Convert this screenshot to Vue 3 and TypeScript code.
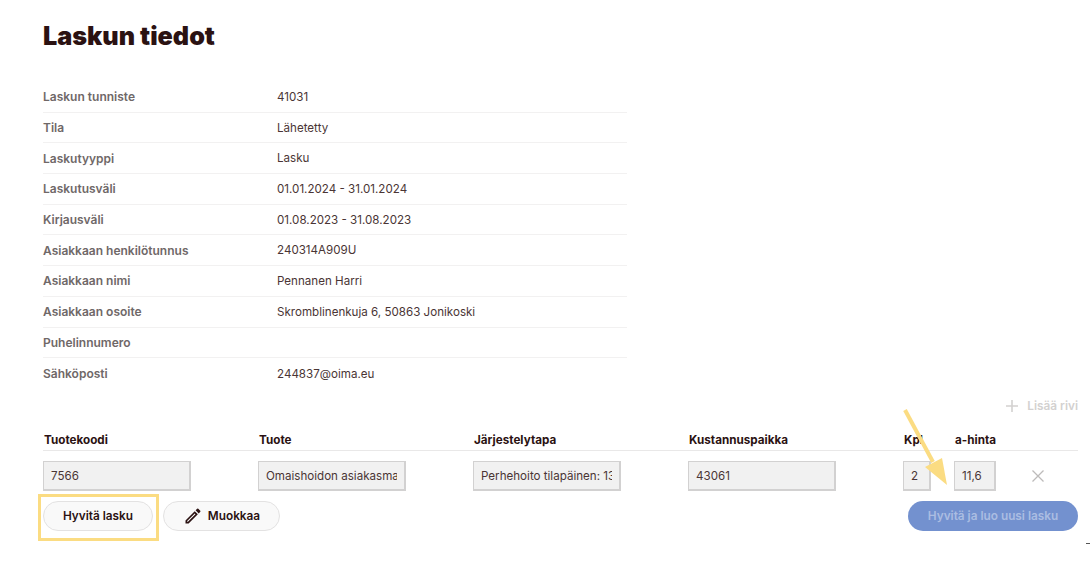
<script setup lang="ts">
const rows: [string, string][] = [
  ['Laskun tunniste', '41031'],
  ['Tila', 'Lähetetty'],
  ['Laskutyyppi', 'Lasku'],
  ['Laskutusväli', '01.01.2024 - 31.01.2024'],
  ['Kirjausväli', '01.08.2023 - 31.08.2023'],
  ['Asiakkaan henkilötunnus', '240314A909U'],
  ['Asiakkaan nimi', 'Pennanen Harri'],
  ['Asiakkaan osoite', 'Skromblinenkuja 6, 50863 Jonikoski'],
  ['Puhelinnumero', ''],
  ['Sähköposti', '244837@oima.eu'],
]
const heads = ['Tuotekoodi', 'Tuote', 'Järjestelytapa', 'Kustannuspaikka', 'Kpl', 'a-hinta']
const cells = [
  { v: '7566', c: 'w148' },
  { v: 'Omaishoidon asiakasmaksu', c: 'w148' },
  { v: 'Perhehoito tilapäinen: 13', c: 'w148' },
  { v: '43061', c: 'w148' },
  { v: '2', c: 'w28' },
]
</script>

<template>
  <div class="page">
    <h1 class="title">Laskun tiedot</h1>
    <dl class="info">
      <div v-for="r in rows" :key="r[0]" class="info-row">
        <dt>{{ r[0] }}</dt>
        <dd>{{ r[1] }}</dd>
      </div>
    </dl>

    <div class="add-line">
      <button class="add" type="button">
        <svg width="14" height="14" viewBox="0 0 14 14"><path d="M7 1v12M1 7h12" stroke="#d3d1d0" stroke-width="1.6" fill="none" /></svg>
        Lisää rivi
      </button>
    </div>

    <div class="grid heads">
      <div v-for="h in heads" :key="h" class="head">{{ h }}</div>
    </div>
    <div class="grid inputs">
      <div v-for="c in cells" :key="c.v"><input :class="c.c" :value="c.v" readonly /></div>
      <div class="last">
        <input class="w42" value="11,6" readonly />
        <svg class="x" width="14" height="14" viewBox="0 0 14 14"><path d="M1.5 1.5l11 11M12.5 1.500l-11 11" stroke="#bdbbba" stroke-width="1.3" fill="none" /></svg>
      </div>
    </div>

    <div class="actions">
      <div class="left">
        <button class="btn" type="button">Hyvitä lasku</button>
        <button class="btn edit" type="button">
          <svg width="20" height="20" viewBox="0 0 24 24"><path fill="#2b1212" d="M3 17.25V21h3.75L17.81 9.94l-3.75-3.75L3 17.25zM5.9 19H5v-.9l9.06-9.06.9.9L5.900 19zM20.71 7.04a1 1 0 0 0 0-1.41l-2.34-2.34a1 1 0 0 0-1.41 0l-1.83 1.83 3.75 3.75 1.83-1.83z" fill-rule="evenodd" /></svg>
          Muokkaa
        </button>
      </div>
      <button class="primary" type="button">Hyvitä ja luo uusi lasku</button>
    </div>

    <div class="highlight"></div>
    <svg class="arrow" width="60" height="90" viewBox="0 0 60 90">
      <path d="M2 1L30 53" stroke="#fbdc82" stroke-width="4" fill="none" />
      <path d="M44 76L22 58L39 49z" fill="#fbdc82" />
    </svg>
    <div class="dash"></div>
  </div>
</template>

<style scoped>
.page {
  position: relative;
  box-sizing: border-box;
  width: 1090px;
  height: 562px;
  padding: 0 12px 0 43px;
  overflow: hidden;
  background: #fff;
  font-family: Inter, "Liberation Sans", sans-serif;
  color: #2b1212;
}
.title {
  margin: 0;
  padding-top: 21px;
  font-size: 25.2px;
  line-height: 30px;
  font-weight: 900;
  color: #2b1212;
}
.info {
  width: 584px;
  margin: 31px 0 0;
}
.info-row {
  display: flex;
  align-items: center;
  box-sizing: border-box;
  height: 30.7px;
  border-bottom: 1px solid #f2f1f1;
  font-size: 12px;
}
.info-row:last-child {
  border-bottom: 0;
}
dt {
  width: 234px;
  font-weight: 600;
  color: #6f6868;
}
dd {
  margin: 0;
  font-size: 11.6px;
  color: #4a3535;
}
.add-line {
  display: flex;
  justify-content: flex-end;
  margin-top: 7px;
}
.add {
  display: flex;
  align-items: center;
  gap: 8px;
  height: 20px;
  padding: 0;
  border: 0;
  background: none;
  font: 600 11.8px Inter, sans-serif;
  color: #d3d1d0;
}
.grid {
  display: grid;
  grid-template-columns: 215px 215px 215px 215px 51px 124px;
  width: 1035px;
}
.heads {
  margin-top: 17px;
  height: 18px;
  align-items: center;
  border-bottom: 1px solid #e9e8e8;
  box-sizing: border-box;
  padding-bottom: 5px;
}
.head {
  padding-left: 1px;
  font-size: 11.7px;
  font-weight: 700;
  color: #2b1212;
}
.inputs {
  margin-top: 10px;
  height: 30px;
}
input {
  display: block;
  box-sizing: border-box;
  height: 30px;
  padding: 2px 7px 0;
  border: 1px solid #d2d1d1;
  border-bottom-width: 2px;
  border-right-width: 2px;
  border-radius: 0;
  outline: 0;
  background: #f1f1f1;
  font: 400 11.6px Inter, sans-serif;
  color: #4a3535;
}
.w148 { width: 148px; }
.w28 { width: 28px; }
.w42 { width: 42px; }
.last {
  display: flex;
  align-items: center;
}
.x {
  margin-left: 35px;
}
.actions {
  display: flex;
  justify-content: space-between;
  width: 1035px;
  margin-top: 10px;
}
.left {
  display: flex;
  gap: 10px;
}
.btn {
  display: flex;
  align-items: center;
  justify-content: center;
  box-sizing: border-box;
  width: 110px;
  height: 30px;
  padding: 0;
  border: 1px solid #e3e2e2;
  border-radius: 15px;
  background: #f9f9f9;
  font: 600 11.8px Inter, sans-serif;
  color: #2b1212;
}
.edit {
  width: 117px;
  gap: 5px;
}
.primary {
  width: 170px;
  height: 30px;
  padding: 0;
  border: 0;
  border-radius: 15px;
  background: #7391cf;
  font: 600 11.8px Inter, sans-serif;
  color: #abbde2;
}
.highlight {
  position: absolute;
  left: 38px;
  top: 494px;
  box-sizing: border-box;
  width: 121px;
  height: 47px;
  border: 3px solid #fbdc82;
}
.arrow {
  position: absolute;
  left: 903px;
  top: 409px;
}
.dash {
  position: absolute;
  left: 1086px;
  top: 543px;
  width: 4px;
  height: 1px;
  background: #555;
}
</style>
